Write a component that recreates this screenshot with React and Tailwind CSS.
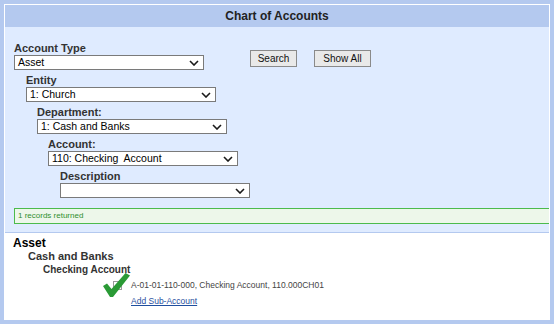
import React from 'react';

const Chevron = () => (
  <svg width="10" height="6" viewBox="0 0 10 6" className="shrink-0">
    <polyline points="1,1 5,5 9,1" fill="none" stroke="#1a1a1a" strokeWidth="1.6" />
  </svg>
);

const SelectBox = ({ value }) => (
  <div className="w-[190px] h-[15px] border border-[#7a7a7a] bg-white flex items-center justify-between pl-[3px] pr-[4px] text-[10.5px] leading-none text-black">
    <span className="whitespace-pre">{value}</span>
    <Chevron />
  </div>
);

const Field = ({ label, value, className = '' }) => (
  <div className={className}>
    <div className="h-[17px] leading-[21px] text-[11px] font-bold text-[#333]">{label}</div>
    <SelectBox value={value} />
  </div>
);

const Button = ({ children, className = '' }) => (
  <button className={`h-[17px] border border-[#8a8a8a] bg-[#e9e9e9] text-[10px] leading-none text-[#111] ${className}`}>
    {children}
  </button>
);

const App = () => {
  return (
    <div className="w-[554px] h-[324px] bg-[#b4c9ef] p-[4px] font-['Liberation_Sans',Arial,sans-serif]">
      <div className="h-full border border-white flex flex-col bg-white">
        <div className="h-[22px] shrink-0 bg-[#b4c9ef] flex items-center justify-center text-[12px] font-bold text-[#222]">
          Chart of Accounts
        </div>

        <div className="bg-[#dfebff] border-b border-[#b4c9ef] pt-[11px] pb-[8px] pl-[9px]">
          <div className="flex items-start">
            <Field label="Account Type" value="Asset" />
            <div className="flex mt-[12px] ml-[46px]">
              <Button className="w-[47px]">Search</Button>
              <Button className="w-[57px] ml-[17px]">Show All</Button>
            </div>
          </div>
          <Field label="Entity" value="1: Church" className="ml-[12px]" />
          <Field label="Department:" value="1: Cash and Banks" className="ml-[23px]" />
          <Field label="Account:" value="110: Checking  Account" className="ml-[34px]" />
          <Field label="Description" value="" className="ml-[46px]" />
          <div className="mt-[10px] h-[16px] border border-r-0 border-[#4cbb4c] bg-[#edf7ea] pl-[3px] flex items-center text-[8px] text-[#2f8f2f]">
            1 records returned
          </div>
        </div>

        <div className="flex-1 bg-white pt-[3px] pl-[8px]">
          <div className="text-[12px] leading-[14px] font-bold text-black">Asset</div>
          <div className="ml-[15px] text-[11px] leading-[13px] font-bold text-[#333]">Cash and Banks</div>
          <div className="ml-[30px] text-[10px] leading-[14px] font-bold text-[#333]">Checking Account</div>
          <div className="relative ml-[100px]">
            <div className="h-[16px] flex items-center">
              <div className="w-[9px] h-[9px] border border-[#9a9a9a] bg-white shrink-0" />
              <span className="ml-[9px] text-[8.5px] text-[#444]">A-01-01-110-000, Checking Account, 110.000CH01</span>
            </div>
            <div className="pl-[18px] leading-[12px]">
              <a href="#" className="text-[8.5px] text-[#1f4e9e] underline">Add Sub-Account</a>
            </div>
            <svg width="27" height="25" viewBox="0 0 27 25" className="absolute left-[-10px] top-[-4px]">
              <polygon points="0,13 4,10.5 8.5,16 22.5,0 27,2.5 10,24 7,24" fill="#2a9a35" />
            </svg>
          </div>
        </div>
      </div>
    </div>
  );
};

export default App;
